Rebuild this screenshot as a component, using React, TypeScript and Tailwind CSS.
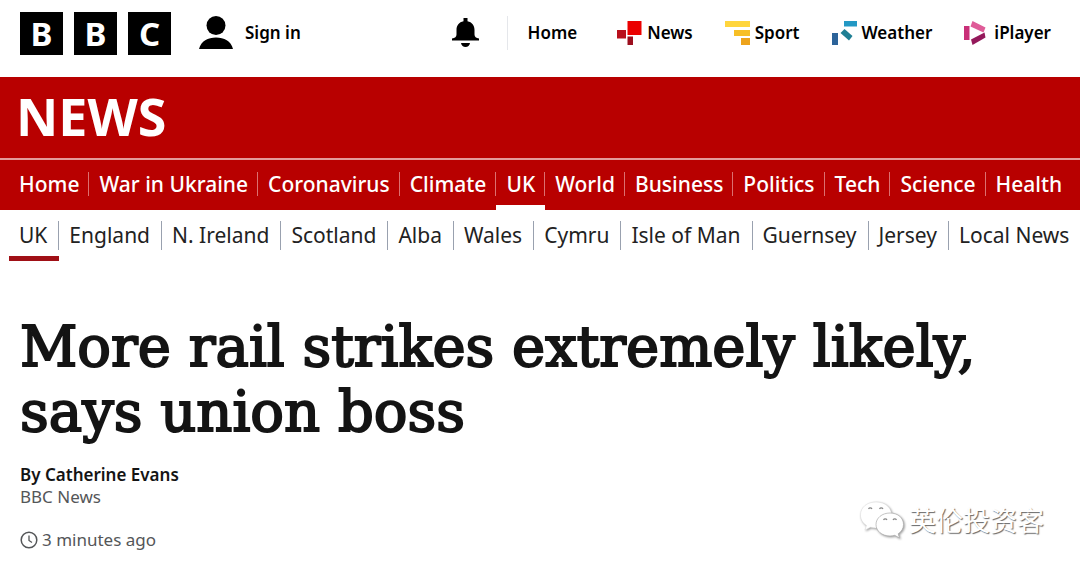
const services = [
  { label: 'News', icon: NewsIcon },
  { label: 'Sport', icon: SportIcon },
  { label: 'Weather', icon: WeatherIcon },
  { label: 'iPlayer', icon: PlayerIcon }
]

const sections = [
  'Home',
  'War in Ukraine',
  'Coronavirus',
  'Climate',
  'UK',
  'World',
  'Business',
  'Politics',
  'Tech',
  'Science',
  'Health'
]

const regions = [
  'UK',
  'England',
  'N. Ireland',
  'Scotland',
  'Alba',
  'Wales',
  'Cymru',
  'Isle of Man',
  'Guernsey',
  'Jersey',
  'Local News'
]

function NewsIcon() {
  return (
    <svg viewBox="0 0 25 25" className="size-[25px]" aria-hidden="true">
      <path fill="#eb0000" d="M10.500 0h14v14h-14z" />
      <path fill="#b8101c" d="M0 9h9v8.500h-9z" />
      <path fill="#9c0f1e" d="M10.500 15.500h5.500v8.500h-5.500z" />
    </svg>
  )
}

function SportIcon() {
  return (
    <svg viewBox="0 0 25 25" className="size-[25px]" aria-hidden="true">
      <path fill="#ffd53d" d="M0 0h25v6h-25z" />
      <path fill="#f7bf26" d="M9 9h16v6h-16z" />
      <path fill="#eda31c" d="M16 17h9v7h-9z" />
    </svg>
  )
}

function WeatherIcon() {
  return (
    <svg viewBox="0 0 25 25" className="size-[25px]" aria-hidden="true">
      <path fill="#2398c4" d="M12 0h13v5.500h-13z" />
      <path fill="#1f7f94" d="M12.500 8L20.500 15L17 19.500L8.500 12z" />
      <path fill="#2c6399" d="M0 12h6v12h-6z" />
    </svg>
  )
}

function PlayerIcon() {
  return (
    <svg viewBox="0 0 25 25" className="size-[25px]" aria-hidden="true">
      <path fill="#c92f78" d="M0 5h5.500v14h-5.500z" />
      <path fill="#df5c98" d="M8.500 0L21.500 6.500L19.500 11.500L6.500 5.500z" />
      <path fill="#94195b" d="M20.500 11.500L21.500 16.500L8.500 24L7 18.500z" />
    </svg>
  )
}

function PersonIcon() {
  return (
    <svg viewBox="0 0 34 34" className="size-[34px]" aria-hidden="true">
      <circle cx="17" cy="9.500" r="9.500" />
      <path d="M0 33C2 25 9 21.500 17 21.500S32 25 34 33z" />
    </svg>
  )
}

function BellIcon() {
  return (
    <svg viewBox="0 0 27 30" className="h-[30px] w-[27px]" aria-hidden="true">
      <path d="M11.500 0h4v3.300C20 4 22.500 7.500 22.500 12v4.500C22.500 19 24 20 27 20.500V22.500H0V20.500C3 20 4.500 19 4.500 16.500V12C4.500 7.500 7 4 11.500 3.300z" />
      <path d="M9 25h9c-.5 2.700-2.200 4-4.500 4S9.500 27.700 9 25z" />
    </svg>
  )
}

function ClockIcon() {
  return (
    <svg viewBox="0 0 18 18" className="size-[18px]" fill="none" stroke="currentColor" aria-hidden="true">
      <circle cx="9" cy="9" r="7.800" strokeWidth="1.500" />
      <path d="M9 4.500V9.500L12 11.500" strokeWidth="1.300" />
    </svg>
  )
}

function ChatIcon() {
  return (
    <svg viewBox="0 0 46 40" className="h-[40px] w-[46px] drop-shadow-[1px_1px_1px_#999]" aria-hidden="true">
      <path
        fill="#fff"
        stroke="#ddd"
        strokeWidth="0.500"
        d="M17 2C8 2 1.500 7.500 1.500 15c0 4.500 2.300 8 6 10.500L6 30l5.500-2.800c2 .6 3.800.8 5.500.8 9 0 15.500-5.500 15.500-13S26 2 17 2z"
      />
      <path
        fill="#fff"
        stroke="#aaa"
        strokeWidth="0.700"
        d="M31 13c-8 0-14 5-14 11.500S23 36 31 36c1.700 0 3.200-.2 4.700-.7L40.500 38l-1.300-4.200C42.500 31.500 44.500 28.500 44.500 24.500 44.500 18 39 13 31 13z"
      />
      <g fill="none" stroke="#888" strokeWidth="1.200">
        <path d="M9.500 9a2 2 0 0 1 3.500 0" />
        <path d="M20.500 9a2 2 0 0 1 3.500 0" />
        <path d="M24.500 20a2 2 0 0 1 3.500 0" />
        <path d="M34 20a2 2 0 0 1 3.500 0" />
      </g>
    </svg>
  )
}

function TopBar() {
  return (
    <header className="flex h-[77px] items-center pr-[29px] pb-[11px] pl-5 text-[17px] font-semibold text-black">
      <a href="#bbc" aria-label="BBC" className="flex gap-[11px] text-[33px] leading-none font-bold text-white">
        {['B', 'B', 'C'].map((letter, index) => (
          <span key={index} className="flex size-[43px] items-center justify-center bg-black">
            {letter}
          </span>
        ))}
      </a>
      <a href="#signin" className="ml-7 flex items-center gap-3">
        <PersonIcon />
        Sign in
      </a>
      <div className="ml-auto flex items-center">
        <button type="button" aria-label="Notifications">
          <BellIcon />
        </button>
        <nav className="ml-7 flex items-center gap-8 border-l border-gray-200 py-1 pl-5" aria-label="BBC services">
          <a href="#home" className="mr-2">Home</a>
          {services.map((service) => (
            <a key={service.label} href={`#${service.label}`} className="flex items-center gap-[5px]">
              <service.icon />
              {service.label}
            </a>
          ))}
        </nav>
      </div>
    </header>
  )
}

function SectionNav() {
  return (
    <div className="bg-[#b80000] text-white">
      <div className="flex h-[81px] items-center pb-1 pl-4">
        <a href="#news" className="text-[52px] leading-none font-bold">NEWS</a>
      </div>
      <nav className="border-t-2 border-[#e39a9a] pl-[9px]" aria-label="News sections">
        <ul className="flex h-[50px] text-[21px] leading-6 font-medium whitespace-nowrap">
          {sections.map((section) => (
            <li
              key={section}
              className={section === 'UK' ? 'border-b-[5px] border-white pt-3' : 'pt-3'}
            >
              <a
                href={`#${section}`}
                className={`block pr-[9px] pl-[10px] ${section === 'Health' ? '' : 'border-r border-[#dc7070]'}`}
              >
                {section}
              </a>
            </li>
          ))}
        </ul>
      </nav>
    </div>
  )
}

function RegionNav() {
  return (
    <nav className="pl-[9px]" aria-label="UK regions">
      <ul className="flex h-[51px] text-[21px] leading-[29px] whitespace-nowrap text-[#222]">
        {regions.map((region) => (
          <li
            key={region}
            className={region === 'UK' ? 'border-b-[5px] border-[#a01016] pt-[11px]' : 'pt-[11px]'}
          >
            <a
              href={`#region-${region}`}
              className={`block pr-[11px] pl-[10px] ${region === 'Local News' ? '' : 'border-r border-gray-400'}`}
            >
              {region}
            </a>
          </li>
        ))}
      </ul>
    </nav>
  )
}

export default function App() {
  return (
    <div className="min-h-screen overflow-hidden bg-white font-['Noto_Sans',sans-serif]">
      <TopBar />
      <SectionNav />
      <RegionNav />
      <main className="relative px-5 pt-[53px] pb-4">
        <h1 className="font-['DejaVu_Serif',serif] text-[56px] leading-[65px] text-[#141414] [-webkit-text-stroke:2px_#141414]">
          More rail strikes extremely likely,
          <br />
          says union boss
        </h1>
        <div className="mt-5 text-[17px] leading-[22px] text-[#545658]">
          <p className="font-semibold text-[#141414]">By Catherine Evans</p>
          <p>BBC News</p>
        </div>
        <p className="mt-5 flex items-center gap-1 text-[17px] leading-6 text-[#545658]">
          <ClockIcon />
          <time>3 minutes ago</time>
        </p>
        <div className="absolute right-9 bottom-7 flex items-center gap-1">
          <ChatIcon />
          <span className="font-['Noto_Sans_CJK_SC',sans-serif] text-[27px] leading-10 text-white [text-shadow:1px_1px_1px_#666]">
            英伦投资客
          </span>
        </div>
      </main>
    </div>
  )
}
